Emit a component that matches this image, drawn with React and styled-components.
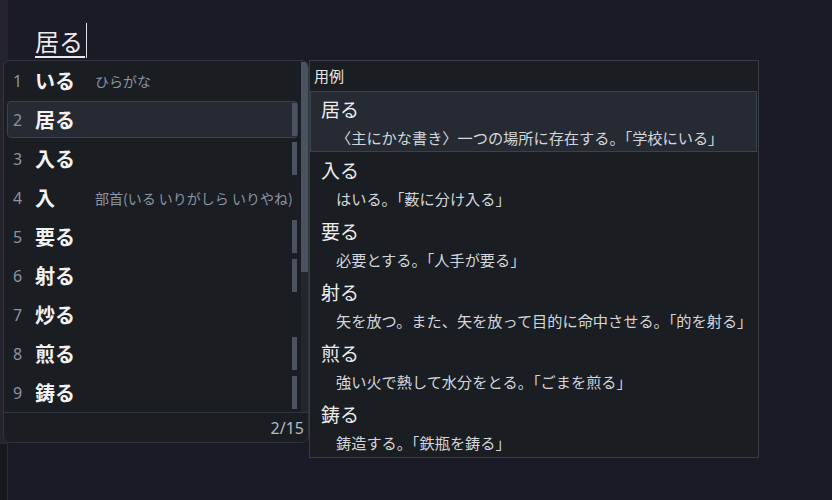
import React from "react";
import styled, { createGlobalStyle } from "styled-components";

const Global = createGlobalStyle`
  html, body { margin: 0; padding: 0; background: #1b1a27; }
  body { font-family: "Noto Sans", "Noto Sans CJK JP", sans-serif; overflow: hidden; }
  * { box-sizing: border-box; }
`;

const JP = `"Noto Sans CJK JP", "Noto Sans", sans-serif`;

const Screen = styled.div`
  position: relative;
  width: 832px;
  height: 500px;
  display: flex;
  background: #1b1a27;
`;

const Gutter = styled.div`
  width: 8px;
  display: flex;
  flex-direction: column;
`;

const GutterTop = styled.div`
  height: 443px;
  background: #24232e;
`;

const GutterBottom = styled.div`
  flex: 1;
  background: #17171e;
  border-top: 1px solid #2c2b36;
  border-right: 1px solid #2c2b36;
`;

const Editor = styled.div`
  flex: 1;
  padding: 23px 0 0 27px;
`;

const InputLine = styled.div`
  display: flex;
  align-items: flex-start;
  height: 36px;
`;

const Composition = styled.span`
  font-family: ${JP};
  font-size: 24px;
  line-height: 32px;
  margin-top: 2px;
  color: #ececec;
  border-bottom: 2px solid #e8e8e8;
  height: 33px;
  padding-right: 2px;
`;

const Caret = styled.span`
  width: 1px;
  height: 35px;
  margin-left: 1px;
  background: #e0e0e0;
`;

const Overlay = styled.div`
  position: absolute;
  left: 3px;
  top: 60px;
  display: flex;
  align-items: flex-start;
`;

const CandidatePopup = styled.div`
  width: 306px;
  height: 383px;
  flex-shrink: 0;
  background: #1a1d22;
  border: 1px solid #30353d;
  border-radius: 7px;
  overflow: hidden;
  display: flex;
  flex-direction: column;
`;

const PopupBody = styled.div`
  display: flex;
  height: 351px;
`;

const List = styled.div`
  flex: 1;
  min-width: 0;
  padding: 1px 3px 0 3px;
  display: flex;
  flex-direction: column;
  gap: 2px;
`;

const Row = styled.div`
  height: 37px;
  display: grid;
  grid-template-columns: 22px 60px minmax(0, 1fr) 5px;
  align-items: center;
  padding-left: 5px;
  border: 1px solid ${(p) => (p.$active ? "#3c434d" : "transparent")};
  background: ${(p) => (p.$active ? "#262b33" : "transparent")};
  border-radius: 4px;
`;

const Num = styled.span`
  font-family: "Noto Sans", sans-serif;
  font-size: 16px;
  color: #8d949e;
`;

const Word = styled.span`
  font-family: ${JP};
  font-size: 20px;
  font-weight: 700;
  color: #f2f2f2;
  line-height: 28px;
`;

const Note = styled.span`
  font-family: ${JP};
  font-size: 14px;
  color: #8a94a3;
  white-space: nowrap;
`;

const Marker = styled.span`
  align-self: stretch;
  margin: 1px 0 1px;
  background: ${(p) => (p.$on ? "#4b5360" : "transparent")};
`;

const Track = styled.div`
  width: 7px;
  flex-shrink: 0;
  background: #22262d;
  padding-top: 1px;
`;

const Thumb = styled.div`
  height: 210px;
  background: #4b5360;
`;

const Footer = styled.div`
  flex: 1;
  border-top: 1px solid #30353d;
  display: flex;
  align-items: center;
  justify-content: flex-end;
  padding-right: 4px;
  font-family: "Noto Sans", sans-serif;
  font-size: 16px;
  color: #b4bac3;
`;

const UsagePanel = styled.div`
  width: 450px;
  height: 398px;
  flex-shrink: 0;
  background: #1a1d22;
  border: 1px solid #383d45;
  display: flex;
  flex-direction: column;
`;

const UsageHeader = styled.div`
  height: 30px;
  padding: 5px 0 0 4px;
  font-family: ${JP};
  font-size: 15px;
  color: #e6e6e6;
  line-height: 20px;
`;

const UsageItem = styled.div`
  height: 61px;
  margin-right: 1px;
  padding: 4px 10px 0 10px;
  border: 1px solid ${(p) => (p.$active ? "#3b424c" : "transparent")};
  background: ${(p) => (p.$active ? "#262b33" : "transparent")};
  display: flex;
  flex-direction: column;
`;

const UsageWord = styled.div`
  font-family: ${JP};
  font-size: 19px;
  line-height: 26px;
  color: #ececec;
`;

const UsageDesc = styled.div`
  font-family: ${JP};
  font-size: 15.2px;
  line-height: 22px;
  margin: 4px 0 0 15px;
  color: #d3d7dd;
  white-space: nowrap;
`;

const candidates = [
  { w: "いる", note: "ひらがな", m: false },
  { w: "居る", m: true, active: true },
  { w: "入る", m: true },
  { w: "入", note: "部首(いる いりがしら いりやね)", m: false },
  { w: "要る", m: true },
  { w: "射る", m: true },
  { w: "炒る", m: false },
  { w: "煎る", m: true },
  { w: "鋳る", m: true },
];

const usages = [
  { w: "居る", d: "〈主にかな書き〉一つの場所に存在する。「学校にいる」", active: true },
  { w: "入る", d: "はいる。「薮に分け入る」" },
  { w: "要る", d: "必要とする。「人手が要る」" },
  { w: "射る", d: "矢を放つ。また、矢を放って目的に命中させる。「的を射る」" },
  { w: "煎る", d: "強い火で熱して水分をとる。「ごまを煎る」" },
  { w: "鋳る", d: "鋳造する。「鉄瓶を鋳る」" },
];

export default function App() {
  return (
    <>
      <Global />
      <Screen>
        <Gutter>
          <GutterTop />
          <GutterBottom />
        </Gutter>
        <Editor>
          <InputLine>
            <Composition>居る</Composition>
            <Caret />
          </InputLine>
        </Editor>
        <Overlay>
          <CandidatePopup>
            <PopupBody>
              <List>
                {candidates.map((c, i) => (
                  <Row key={i} $active={c.active}>
                    <Num>{i + 1}</Num>
                    <Word>{c.w}</Word>
                    <Note>{c.note || ""}</Note>
                    <Marker $on={c.m} />
                  </Row>
                ))}
              </List>
              <Track>
                <Thumb />
              </Track>
            </PopupBody>
            <Footer>2/15</Footer>
          </CandidatePopup>
          <UsagePanel>
            <UsageHeader>用例</UsageHeader>
            {usages.map((u, i) => (
              <UsageItem key={i} $active={u.active}>
                <UsageWord>{u.w}</UsageWord>
                <UsageDesc>{u.d}</UsageDesc>
              </UsageItem>
            ))}
          </UsagePanel>
        </Overlay>
      </Screen>
    </>
  );
}
